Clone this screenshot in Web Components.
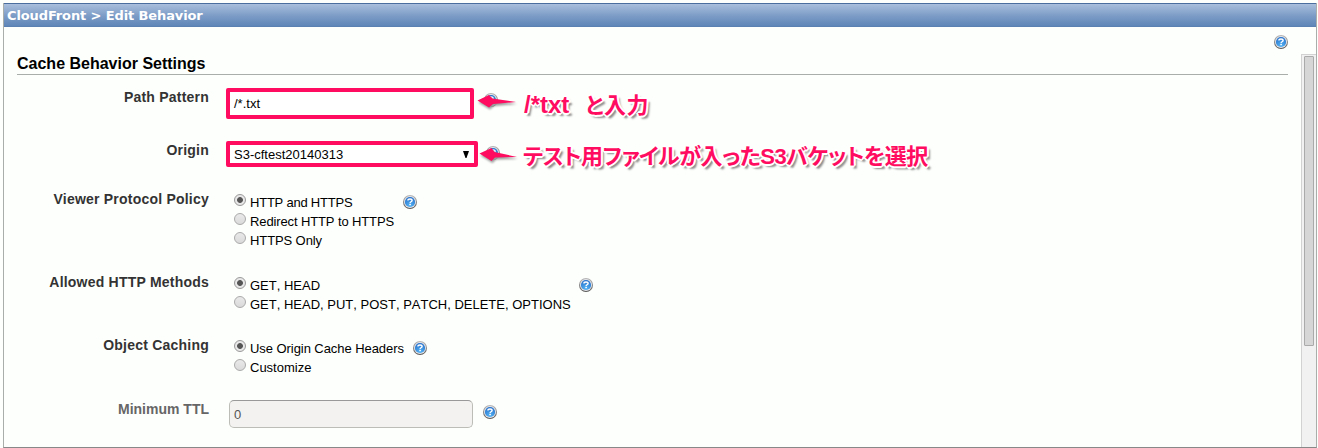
<!DOCTYPE html>
<html lang="en">
<head>
<meta charset="utf-8">
<title>CloudFront &gt; Edit Behavior</title>
<style>
html,body{margin:0;height:100%;overflow:hidden;background:#fdfffc}
body{font:13px/19px "Liberation Sans",Arial,"Noto Sans CJK JP",sans-serif;color:#000;font-kerning:none}
</style>
</head>
<body>
<behavior-dialog heading="CloudFront &gt; Edit Behavior">
  <settings-section heading="Cache Behavior Settings">
    <form-row label="Path Pattern" style="height:53px">
      <text-box value="/*.txt" marked></text-box><help-icon style="margin:4px 0 0 10px"></help-icon>
      <call-out slot="note" style="left:477px;top:0"><b>/*txt</b>と入力</call-out>
    </form-row>
    <form-row label="Origin" style="height:49px">
      <select-box value="S3-cftest20140313"></select-box><help-icon style="margin:4px 0 0 8px"></help-icon>
      <call-out slot="note" long style="left:479px;top:0">テスト用ファイルが入ったS3バケットを選択</call-out>
    </form-row>
    <form-row label="Viewer Protocol Policy" style="height:83px">
      <radio-list style="width:160px"><radio-item checked style="letter-spacing:-.22px">HTTP and HTTPS</radio-item><radio-item style="letter-spacing:-.12px">Redirect HTTP to HTTPS</radio-item><radio-item style="letter-spacing:-.1px">HTTPS Only</radio-item></radio-list>
      <help-icon style="margin:4px 0 0 9px"></help-icon>
    </form-row>
    <form-row label="Allowed HTTP Methods" style="height:63px">
      <radio-list style="width:336px"><radio-item checked>GET, HEAD</radio-item><radio-item>GET, HEAD, PUT, POST, PATCH, DELETE, OPTIONS</radio-item></radio-list>
      <help-icon style="margin:4px 0 0 9px"></help-icon>
    </form-row>
    <form-row label="Object Caching" style="height:64px">
      <radio-list style="width:170px"><radio-item checked style="letter-spacing:-.06px">Use Origin Cache Headers</radio-item><radio-item>Customize</radio-item></radio-list>
      <help-icon style="margin:4px 0 0 9px"></help-icon>
    </form-row>
    <form-row label="Minimum TTL" muted style="height:46px">
      <text-box value="0" muted></text-box><help-icon style="margin:4px 0 0 9px"></help-icon>
    </form-row>
  </settings-section>
</behavior-dialog>
<script>
const component = (name, render) => customElements.define(name, class extends HTMLElement {
  constructor() {
    super();
    this.attachShadow({ mode: 'open' }).innerHTML = render(this);
  }
});

component('help-icon', () => `
<style>:host{display:block;flex:none;width:14px;height:14px}svg{display:block}</style>
<svg width="14" height="14" viewBox="0 0 14 14">
  <defs>
    <linearGradient id="rim" x1="0" y1="0" x2="0" y2="1"><stop stop-color="#b8b8b8"/><stop offset="1" stop-color="#555"/></linearGradient>
    <radialGradient id="blue" cy=".85" r=".8"><stop stop-color="#54b4f5"/><stop offset="1" stop-color="#2a74cc"/></radialGradient>
  </defs>
  <circle cx="7" cy="7" r="7" fill="url(#rim)"/><circle cx="7" cy="6.9" r="6" fill="#e4e6ea"/>
  <circle cx="7" cy="7" r="5.1" fill="url(#blue)"/>
  <path d="M4.9 5.5c0-2 4.2-2 4.2 0C9.1 6.8 7.1 6.7 7.1 8" fill="none" stroke="#fff" stroke-width="1.4"/><rect x="6.3" y="8.8" width="1.6" height="1.4" fill="#fff"/>
</svg>`);

component('call-out', el => `
<style>
:host{position:absolute;display:flex;color:#ff0b5f;white-space:nowrap;font:bold 22px/30px "Liberation Sans","Noto Sans CJK JP",sans-serif}
:host([long]){letter-spacing:-.47px}
svg{display:block;flex:none;filter:drop-shadow(1px 2px 1px #999)}
span{display:block;margin:${el.hasAttribute('long') ? '0 0 0 2px' : '1px 0 0 5px'};
 font-feature-settings:"palt";text-shadow:-2px 0 #fff,2px 0 #fff,0 -2px #fff,0 2px #fff,-1px -1px #fff,1px 1px #fff,1px -1px #fff,-1px 1px #fff,3px 3px 2px #888}
:host(:not([long])){letter-spacing:.4px}
::slotted(b){font-size:24px;margin-right:16px;letter-spacing:0}
</style>
<svg width="42" height="26" viewBox="0 0 42 26"><path d="${el.hasAttribute('long')
  ? 'M.5 11.5L12.5 6L15.5 10L38 15L16 15.5L12.5 19Z' : 'M.5 11.5L12 6L15.5 9.5L39 13L16 15L12 18.5Z'}" fill="#ff0b5f"/></svg>
<span><slot></slot></span>`);

component('text-box', el => `
<style>
:host{display:block;flex:none;box-sizing:border-box;padding-left:4px}
:host([marked]){width:248px;height:31px;margin:-1px 0 0;border:4px solid #ff0b5f;border-radius:2px;line-height:24px;background:#fff}
:host([muted]){width:244px;height:28px;margin:-1px 1px 0 3px;border:1px solid #bdbdb8;border-top-color:#999;border-radius:5px;background:#f3f2f1;color:#555;line-height:27px}
</style>${el.getAttribute('value')}`);

component('select-box', el => `
<style>
:host{display:flex;flex:none;box-sizing:border-box;width:252px;height:26px;margin:-1px 0 0;border:4px solid #ff0b5f;border-radius:2px;padding:0 5px 0 4px;justify-content:space-between;align-items:center;background:#fff}
svg{display:block}
</style><span>${el.getAttribute('value')}</span><svg width="6" height="7"><path d="M0 0H6L3.5 7H2.5Z"/></svg>`);

component('radio-list', () => `
<style>:host{display:block;margin:2px 0 0 8px}</style><slot></slot>`);

component('radio-item', () => `
<style>
:host{display:flex;height:19px;white-space:nowrap;line-height:19px}
i{box-sizing:border-box;flex:none;width:12px;height:12px;margin:1px 4px 0 0;border:1px solid #aaa;border-radius:50%;background:linear-gradient(#e9e9e9,#dadada)}
:host([checked]) i{border-color:#999;background:radial-gradient(circle,#555 0 2.5px,#e8e8e8 3.3px)}
</style><i></i><slot></slot>`);

component('form-row', el => `
<style>
:host{display:flex;position:relative;align-items:flex-start;--label:#333;--track:.22px}
:host([muted]){--label:#666;--track:0px}
label{flex:none;width:209px;margin:0 17px 0 0;text-align:right;font:bold 14px/16px "Liberation Sans",Arial,sans-serif;letter-spacing:var(--track);color:var(--label)}
div{display:flex;align-items:flex-start}
</style><label>${el.getAttribute('label')}</label><div><slot></slot></div><slot name="note"></slot>`);

component('settings-section', el => `
<style>
:host{display:block;flex:1;padding-left:13px}
header{display:flex;flex-direction:column;width:1271px;height:48px;box-sizing:border-box;border-bottom:1px solid #aaaeaa;margin-bottom:14px}
header help-icon{align-self:flex-end;margin-top:8px}
h2{margin:5px 0 0;font:bold 16px/20px "Liberation Sans",Arial,sans-serif}
::slotted(form-row){margin-left:-17px}
</style>
<header><help-icon></help-icon><h2>${el.getAttribute('heading')}</h2></header><slot></slot>`);

component('scroll-track', () => `
<style>
:host{display:block;flex:none;width:15px;box-sizing:border-box;margin-top:27px;border:solid #d2d2d2;border-width:1px 0 0 1px;padding:1px 0 0 2px;background:#f1f1f1}
div{box-sizing:border-box;width:10px;height:290px;border:1px solid #aaa;border-radius:1px;background:#d6d6d6}
</style><div></div>`);

component('behavior-dialog', el => `
<style>
:host{display:flex;flex-direction:column;box-sizing:border-box;width:1314px;height:445px;margin:3px 0 0 3px;border:1px solid #aaaeaa;border-top:0;border-bottom-color:#888;overflow:hidden}
header{flex:none;box-sizing:border-box;height:24px;margin:0 -1px;padding:1px 4px 0 4px;border:1px solid #5b80b2;border-top-color:#4a6f9f;border-left:0;background:linear-gradient(#a9bfdc,#7f9ec8 50%,#5e86b7);color:#fff;font:bold 13px/21px Verdana,"DejaVu Sans",sans-serif;letter-spacing:-.12px}
main{display:flex;flex:1;min-height:0}
</style>
<header>${el.getAttribute('heading')}</header><main><slot></slot><scroll-track></scroll-track></main>`);
</script>
</body>
</html>
